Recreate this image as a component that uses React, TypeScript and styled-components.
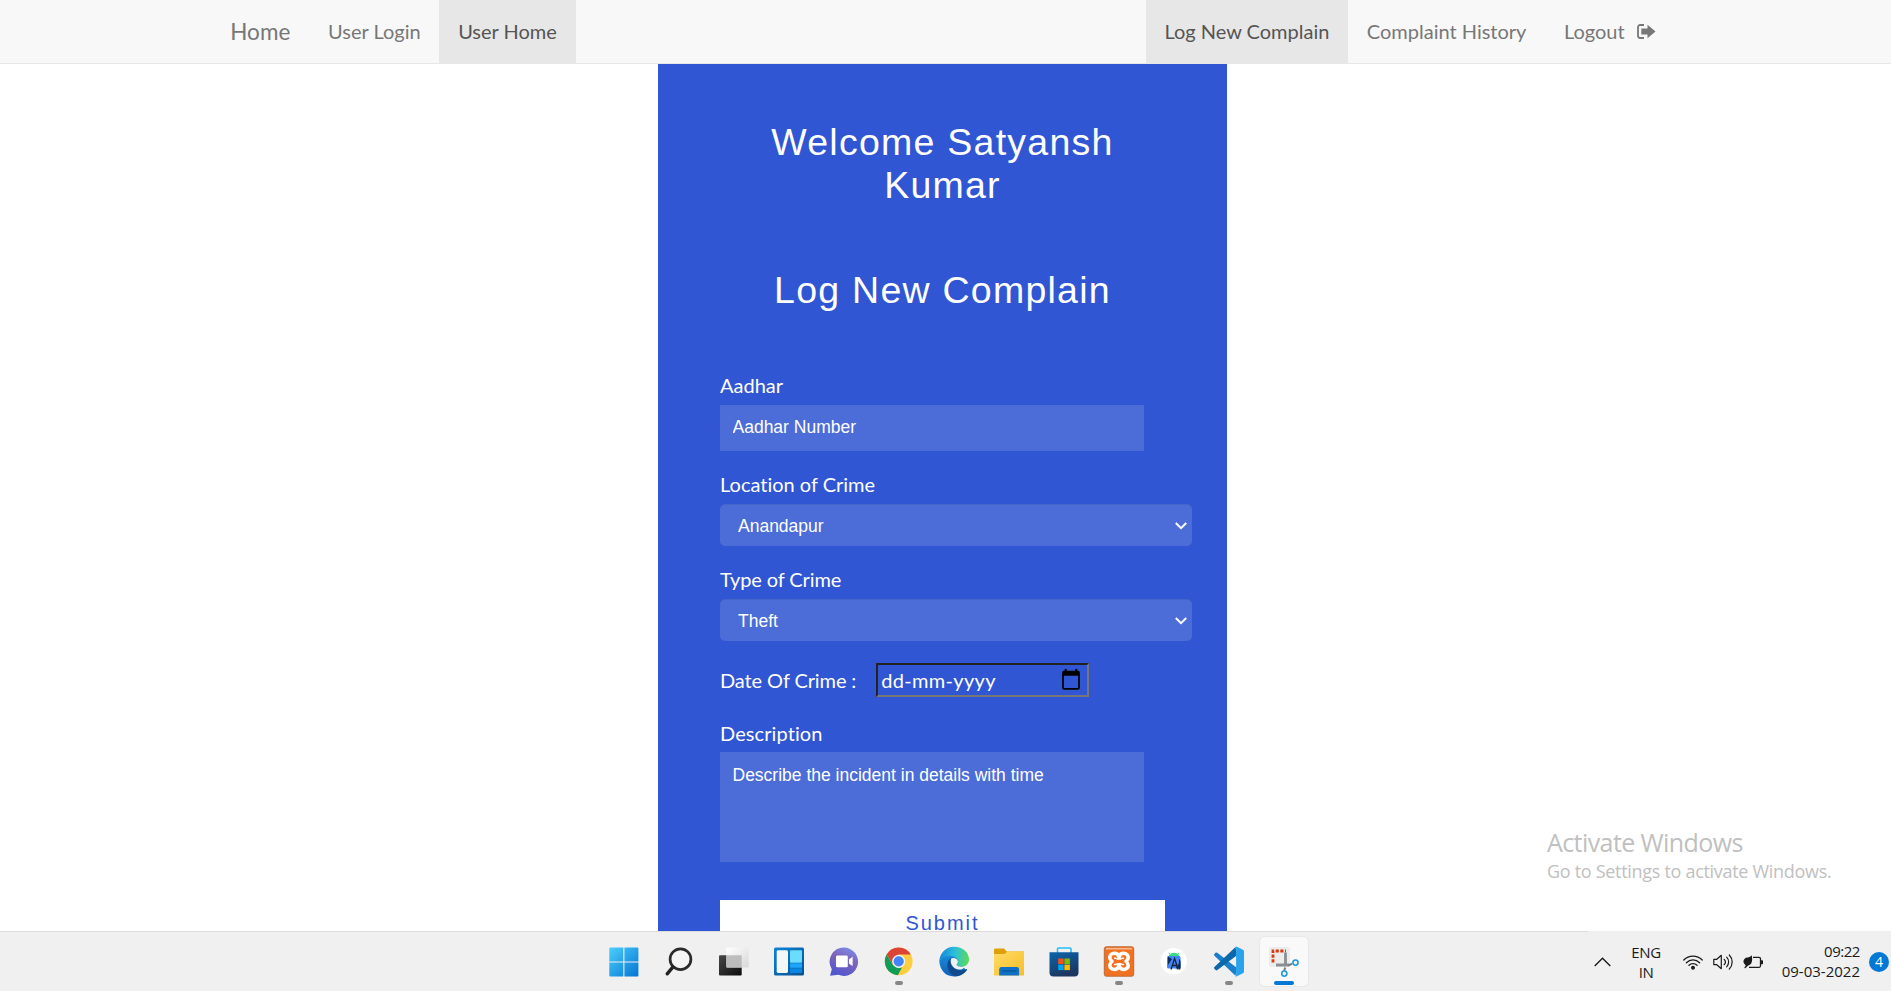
import React from 'react';
import styled, { createGlobalStyle, css } from 'styled-components';

const GlobalStyle = createGlobalStyle`
  *, *::before, *::after { box-sizing: border-box; }
  body { margin: 0; background: #fff; overflow: hidden; }
`;

const sans = '"Liberation Sans", Arial, sans-serif';
const lato = 'Lato, "Liberation Sans", sans-serif';
const system = '"Open Sans", "Noto Sans", sans-serif';

const Screen = styled.div`
  position: relative;
  display: flex;
  flex-direction: column;
  height: 991px;
  font-family: ${lato};
  font-variant-ligatures: none;
`;

/* ---------- navigation ---------- */

const Navbar = styled.nav`
  flex: none;
  display: flex;
  justify-content: space-between;
  height: 64px;
  padding: 0 216.6px 0 211.4px;
  background: #f8f8f8;
  border-bottom: 1px solid #e7e7e7;
`;

const NavGroup = styled.div`
  display: flex;
`;

const Brand = styled.a`
  padding: 18.75px;
  font-size: 22.5px;
  line-height: 25px;
  letter-spacing: 0.1px;
  color: #777;
`;

const NavLink = styled.a<{ $active?: boolean }>`
  display: flex;
  align-items: center;
  gap: 12px;
  height: 64px;
  padding: 0 18.75px 1.5px;
  font-size: 20px;
  line-height: 25px;
  white-space: nowrap;
  color: ${(p) => (p.$active ? '#555' : '#777')};
  background: ${(p) => (p.$active ? '#e7e7e7' : 'transparent')};
`;

/* ---------- complaint form ---------- */

const Main = styled.main`
  flex: 1;
  min-height: 0;
  overflow: hidden;
  padding-left: 658px;
`;

const Panel = styled.section`
  width: 569px;
  height: 867px;
  padding: 57px 0 0 62px;
  background: #3056d3;
  color: #fff;
`;

const Heading = styled.h2`
  width: 445px;
  margin: 0 0 62px;
  padding: 0 40px;
  font: 400 37.5px/42.75px ${sans};
  letter-spacing: 1.25px;
  text-align: center;
`;

const Form = styled.form`
  display: flex;
  flex-direction: column;
  align-items: flex-start;
`;

const Field = styled.div<{ $gap: number; $after: number }>`
  display: flex;
  flex-direction: column;
  gap: ${(p) => p.$gap}px;
  margin-bottom: ${(p) => p.$after}px;
`;

const Label = styled.label<{ $tracking?: number }>`
  font-size: 20px;
  line-height: 25px;
  letter-spacing: ${(p) => p.$tracking ?? 0}px;
`;

const control = css`
  display: block;
  margin: 0;
  border: 0;
  outline: 0;
  background: #4c6dd8;
  color: #fff;
  font: 400 17.5px ${sans};
  &::placeholder { color: #fff; opacity: 1; }
`;

const TextInput = styled.input`
  ${control}
  width: 424px;
  height: 46px;
  padding: 0 12.5px 2px;
`;

const TextArea = styled.textarea`
  ${control}
  width: 424px;
  height: 110px;
  padding: 12.5px;
  resize: none;
`;

const SelectWrap = styled.div`
  position: relative;
  width: 472px;
`;

const Select = styled.select`
  ${control}
  appearance: none;
  width: 100%;
  height: 42px;
  padding: 1px 18px 0;
  border-radius: 5px;
  box-shadow: inset 0 1px 1px rgba(0, 0, 0, 0.075);
`;

const Chevron = styled.svg`
  position: absolute;
  right: 4px;
  top: 17px;
  pointer-events: none;
`;

const DateRow = styled.div`
  display: flex;
  align-items: center;
  margin: 22px 0 24px;
`;

const DateInput = styled.div`
  display: flex;
  align-items: center;
  justify-content: space-between;
  width: 213px;
  height: 34px;
  margin-left: 20px;
  padding: 0 5px 0 2px;
  border: 2px solid;
  border-color: #222 #767676 #767676 #222;
  font-size: 20px;
`;

const DateText = styled.span`
  padding-left: 1px;
  line-height: 24px;
  letter-spacing: 0.32px;
`;

const Submit = styled.button`
  display: flex;
  justify-content: center;
  align-items: flex-start;
  width: 445px;
  height: 50px;
  margin-top: 38px;
  padding: 12px 0 0;
  border: 0;
  background: #fff;
  color: #3056d3;
  font: 400 20px/23px ${sans};
  letter-spacing: 2px;
`;

/* ---------- desktop overlay and taskbar ---------- */

const Watermark = styled.aside`
  position: absolute;
  left: 1547px;
  top: 825px;
  font-family: ${system};
  color: #c0c0c0;
  white-space: nowrap;
`;

const WatermarkTitle = styled.div`
  font-size: 25px;
  line-height: 34px;
  letter-spacing: -0.58px;
`;

const WatermarkText = styled.div`
  font-size: 18px;
  line-height: 25px;
  letter-spacing: -0.3px;
`;

const Taskbar = styled.footer`
  flex: none;
  display: flex;
  justify-content: space-between;
  height: 60px;
  padding: 6px 2px 5px 599.5px;
  background: linear-gradient(#dcdcdc, #dcdcdc) 0 0 / 1588px 1px no-repeat, #f0f0f0;
`;

const Apps = styled.div`
  display: flex;
  gap: 7px;
`;

const AppTile = styled.div<{ $state?: 'open' | 'active' }>`
  position: relative;
  display: flex;
  align-items: center;
  justify-content: center;
  width: 48.04px;
  height: 49px;
  border-radius: 5px;
  ${(p) =>
    p.$state === 'active' &&
    css`
      background: #f9f9f9;
      box-shadow: 0 0 0 1px #e8e8e8;
    `}
  ${(p) =>
    p.$state &&
    css`
      &::after {
        content: '';
        position: absolute;
        bottom: 1px;
        width: ${p.$state === 'active' ? 20 : 8}px;
        height: 4px;
        border-radius: 2px;
        background: ${p.$state === 'active' ? '#0078d4' : '#868686'};
      }
    `}
`;

const Tray = styled.div`
  display: flex;
  align-items: center;
  height: 49px;
  font: 400 15px/20px ${system};
  color: #1b1b1b;
`;

const Language = styled.div`
  width: 34px;
  margin: 0 20px 0 18px;
  text-align: center;
  letter-spacing: -0.4px;
`;

const StatusIcons = styled.div`
  display: flex;
  align-items: center;
  gap: 10px;
`;

const Clock = styled.div`
  width: 78px;
  margin: -2px 9px 0 19px;
  display: flex;
  flex-direction: column;
  align-items: flex-end;
  white-space: nowrap;
`;

const ClockTime = styled.div`
  letter-spacing: -0.45px;
`;

const Badge = styled.div`
  width: 20px;
  height: 20px;
  border-radius: 50%;
  background: #0078d4;
  color: #fff;
  font-size: 14px;
  line-height: 20px;
  text-align: center;
`;

const Icon = ({ children }: { children: React.ReactNode }) => (
  <svg width="32" height="32" viewBox="0 0 32 32">{children}</svg>
);

const WindowsIcon = () => (
  <Icon>
    <defs>
      <linearGradient id="win" x1="0" y1="0" x2="32" y2="32" gradientUnits="userSpaceOnUse">
        <stop offset="0" stopColor="#4fd3ff" />
        <stop offset="1" stopColor="#0070d0" />
      </linearGradient>
    </defs>
    <path fill="url(#win)" d="M2.3 1.5h13v14h-14v-13a1 1 0 0 1 1-1zM16.4 1.5h13a1 1 0 0 1 1 1v13h-14zM1.3 16.5h14v14h-13a1 1 0 0 1-1-1zM16.4 16.5h14v13a1 1 0 0 1-1 1h-13z" />
  </Icon>
);

const SearchIcon = () => (
  <Icon>
    <circle cx="17.5" cy="13.2" r="10.4" fill="#f5f5f5" stroke="#2b2b2b" strokeWidth="2.7" />
    <path d="M9.8 21.2 4.2 27.8" stroke="#222" strokeWidth="3.4" strokeLinecap="round" />
  </Icon>
);

const TaskViewIcon = () => (
  <Icon>
    <defs>
      <linearGradient id="tvd" x1="0" y1="0" x2="1" y2="1"><stop stopColor="#484848" /><stop offset="1" stopColor="#0c0c0c" /></linearGradient>
      <linearGradient id="tvl" x1="0" y1="0" x2="1" y2="1"><stop stopColor="#fff" /><stop offset="1" stopColor="#d8d8d8" /></linearGradient>
    </defs>
    <rect x="1" y="9.3" width="22.7" height="20.3" rx="1" fill="url(#tvd)" />
    <rect x="8.4" y="1.5" width="22.3" height="20" rx="1" fill="url(#tvl)" />
    <rect x="8.4" y="9.3" width="15.3" height="12.2" fill="#bdbdbd" />
  </Icon>
);

const WidgetsIcon = () => (
  <Icon>
    <defs><linearGradient id="wdg" x1="0" y1="0" x2="1" y2="1"><stop stopColor="#0b84d8" /><stop offset="1" stopColor="#0a4f8f" /></linearGradient></defs>
    <rect x="1" y="1.5" width="30" height="28" rx="1.5" fill="url(#wdg)" />
    <rect x="3.7" y="4.2" width="11.3" height="22.7" rx="1.4" fill="#f6f6f6" />
    <rect x="17" y="4.2" width="12" height="12.5" rx="1" fill="#6bdcff" />
    <rect x="17" y="17.2" width="12" height="4.6" rx=".6" fill="#1ba6fb" />
    <rect x="17" y="22.3" width="12" height="4.6" rx=".6" fill="#0a86e0" />
  </Icon>
);

const ChatIcon = () => (
  <Icon>
    <defs><linearGradient id="cht" x1=".8" y1="0" x2=".4" y2="1"><stop stopColor="#7b8fee" /><stop offset=".45" stopColor="#7e63b8" /><stop offset="1" stopColor="#5157cf" /></linearGradient></defs>
    <path fill="url(#cht)" d="M16 1.5a14.2 14.2 0 1 1-5.6 27.3L2 29.7l1.8-6.5A14.2 14.2 0 0 1 16 1.5z" />
    <rect x="8" y="9.5" width="11.8" height="11.8" rx="1.4" fill="#fff" />
    <path fill="#fff" d="m21 13.4 3.6-2.7v9.4L21 17.5z" />
  </Icon>
);

const ChromeIcon = () => (
  <Icon>
    <circle cx="15.7" cy="15.3" r="13.9" fill="#ffcd40" />
    <path fill="#db4437" d="M3.6 8.4A13.9 13.9 0 0 1 27.8 8.6H15.7L9.8 18.6z" />
    <path fill="#0f9d58" d="M3.6 8.4l6.1 10.4 6 3.3 3.5-.8-4.4 7.9A13.9 13.9 0 0 1 3.6 8.4z" />
    <circle cx="15.7" cy="15.3" r="6.6" fill="#f1f1f1" />
    <circle cx="15.7" cy="15.3" r="5.1" fill="#4285f4" />
  </Icon>
);

const EdgeIcon = () => (
  <Icon>
    <defs>
      <linearGradient id="eg1" x1="2" y1="8" x2="31" y2="12" gradientUnits="userSpaceOnUse"><stop stopColor="#1787d8" /><stop offset=".5" stopColor="#2bbfdc" /><stop offset="1" stopColor="#5bdc52" /></linearGradient>
      <linearGradient id="eg2" x1="0" y1="0" x2="0" y2="1"><stop stopColor="#1c8fdd" /><stop offset="1" stopColor="#0b62b8" /></linearGradient>
    </defs>
    <path fill="url(#eg2)" d="M1.3 15C2 24 7 30.4 16 30.4c5 0 9-2 12-6L18 10 6 7z" />
    <path fill="url(#eg1)" d="M1.3 15.8C1.5 7 8 .8 16 .8c9 0 15 6 15 12.4 0 4.8-3.3 7.6-7.6 7.6-3 0-4.8-.8-4.8-2 0-.8 1.3-1.4 1.3-3.5 0-3-3-5.3-7.6-5.3C7 10 2.2 12 1.3 15.8z" />
    <path fill="#114a8b" d="M12.7 12.2c-5.5 3.5-4.5 15 4.8 18 5-.2 9-2.6 11.5-6.3.3-.6-.3-1-.8-.7-6 2.7-14.3.6-15.5-6.2-.2-1.7 0-3.2.9-4.6z" />
    <path fill="#f0f0f0" d="M13.3 12.6c1.5-1.3 6-.7 6.6 2.7.2 2-1.5 2.9-1.3 3.7.7 1.7 5 2.4 8.5.9-1 2.7-3.6 3.8-6.3 3.6-6.8-.6-9.3-7.7-7.5-10.9z" />
  </Icon>
);

const FolderIcon = () => (
  <Icon>
    <defs><linearGradient id="fld" x1="0" y1="0" x2="1" y2="1"><stop stopColor="#ffdb62" /><stop offset="1" stopColor="#f8bd2c" /></linearGradient></defs>
    <path fill="#e09f06" d="M2 2.5h9l2.8 3H31v5H1v-7z" />
    <path fill="url(#fld)" d="M1 8h10.5l3-2.4H30a1 1 0 0 1 1 1v22.8H1z" />
    <path fill="#0d72c7" d="M6.2 29.4v-6a2.3 2.3 0 0 1 2.3-2.3h15.3a2.3 2.3 0 0 1 2.3 2.3v6z" />
    <path stroke="#064a86" strokeWidth="1" strokeLinecap="round" d="M9.5 25h13.5" />
  </Icon>
);

const StoreIcon = () => (
  <Icon>
    <defs><linearGradient id="sto" x1="0" y1="0" x2=".4" y2="1"><stop stopColor="#0a66ae" /><stop offset="1" stopColor="#1c3660" /></linearGradient></defs>
    <path d="M9.5 8V3a1 1 0 0 1 1-1h11.5a1 1 0 0 1 1 1v5" fill="none" stroke="#27bdf5" strokeWidth="1.6" />
    <path fill="url(#sto)" d="M1.5 6.2h29v20.3a4 4 0 0 1-4 4h-21a4 4 0 0 1-4-4z" />
    <rect x="10.2" y="12.5" width="5.5" height="5.5" fill="#f25022" />
    <rect x="16.4" y="12.5" width="5.5" height="5.5" fill="#7fba00" />
    <rect x="10.2" y="18.6" width="5.5" height="5.5" fill="#00a4ef" />
    <rect x="16.4" y="18.6" width="5.5" height="5.5" fill="#ffb900" />
  </Icon>
);

const XamppIcon = () => (
  <Icon>
    <rect x="1.3" y=".8" width="29.4" height="29.4" rx="2" fill="#f27121" stroke="#bb6a3a" />
    <path d="M3 2.7h26" stroke="#f9b98e" strokeWidth="1.6" />
    <path
      fill="none"
      stroke="#fff"
      strokeWidth="3.6"
      strokeLinejoin="round"
      d="M16 10.6c-.9-2.3-2.3-3.3-4.5-3.3-3 0-4.7 1.8-4.7 4.2 0 1.7.8 2.9 2.2 3.9-1.4 1-2.2 2.2-2.2 3.9 0 2.4 1.7 4.2 4.7 4.2 2.2 0 3.6-1 4.5-3.3.9 2.3 2.3 3.3 4.5 3.3 3 0 4.7-1.8 4.7-4.2 0-1.7-.8-2.9-2.2-3.9 1.4-1 2.2-2.2 2.2-3.9 0-2.4-1.7-4.2-4.7-4.2-2.2 0-3.6 1-4.5 3.3z"
    />
    <path d="M11.6 12.3h1M19.4 12.3h1M11.6 18.5h1M19.4 18.5h1" stroke="#fff" strokeWidth="1.6" strokeLinecap="round" />
    <path d="M12.6 15.4h6.8" stroke="#f27121" strokeWidth="2" />
    <path d="M14.3 12.6h3.4M14.3 18.2h3.4" stroke="#fff" strokeWidth="2.4" strokeLinecap="round" />
  </Icon>
);

const StudioIcon = () => (
  <Icon>
    <circle cx="15.7" cy="15.3" r="13.2" fill="#fff" />
    <path fill="#3ddc84" d="M10.3 10.5a6.3 6.3 0 0 1 11.5 0z" />
    <path d="m10.8 6.8 1.5 1.8M21 6.8l-1.4 1.8" stroke="#3ddc84" strokeWidth="1" />
    <rect x="9" y="10" width="13.5" height="12.5" rx="1.5" fill="#4285f4" />
    <path fill="#0b2e62" d="m10 10.5 4 2.5-4 6zM22.5 15v7.5h-5z" />
    <path d="m13 23.5 3.6-11 3.6 11M14.2 19.5h5M21.6 13.5v10" fill="none" stroke="#10243d" strokeWidth="1.3" />
  </Icon>
);

const CodeIcon = () => (
  <Icon>
    <path fill="#1c7fc9" d="M4.3 6.8a1.5 1.5 0 0 0-1.9 0L1.4 7.9a1.3 1.3 0 0 0 0 1.9L22.5 29.8 24 22z" />
    <path fill="#0b68ad" d="M22.5.9 1.4 20.9a1.3 1.3 0 0 0 0 1.9l1.2 1.2a1.5 1.5 0 0 0 1.8.1L24 9.2z" />
    <path fill="#2aa3ee" d="M22.4.8a1.8 1.8 0 0 1 1.4-.1l6.2 3a1.8 1.8 0 0 1 1 1.7v20.2a1.8 1.8 0 0 1-1 1.7l-6.2 3a1.8 1.8 0 0 1-2-.4c.7.7 1.3-.1 1.3-.8V2c0-.9-.5-1.4-.7-1.2z" />
  </Icon>
);

const SnipIcon = () => (
  <Icon>
    <rect x="1" y="1" width="21" height="20" rx="2" fill="#ececec" />
    <path fill="none" stroke="#cf3d12" strokeWidth="2.8" strokeDasharray="3.2 1.5" d="M5 16.5V5h13" />
    <path fill="none" stroke="#8a8f94" strokeWidth="2.8" d="M17.5 6.5V20M8 19h13" />
    <path stroke="#777c80" strokeWidth="2" d="m20.5 19.5 3.5-1.8M17.2 21.5l-1 3.2" />
    <circle cx="27.5" cy="16.6" r="2.6" fill="#f4f4f4" stroke="#2299d8" strokeWidth="1.6" />
    <circle cx="16.3" cy="27.6" r="2.6" fill="#f4f4f4" stroke="#2299d8" strokeWidth="1.6" />
  </Icon>
);

const LogoutIcon = () => (
  <svg width="19" height="15" viewBox="0 0 19 15">
    <path d="M7 1H3.2A2.2 2.2 0 0 0 1 3.2v8.6A2.2 2.2 0 0 0 3.2 14H7" fill="none" stroke="#777" strokeWidth="1.8" />
    <path fill="#777" d="M4.3 4.5h6.2V.8L18.5 7.5l-8 6.7v-3.7H4.3z" />
  </svg>
);

const CalendarIcon = () => (
  <svg width="20" height="22" viewBox="0 0 20 22">
    <path d="M1 5v13.8a1 1 0 0 0 1 1h14a1 1 0 0 0 1-1V5" fill="none" stroke="#000" strokeWidth="1.7" />
    <path d="M.2 3.3a1.5 1.5 0 0 1 1.5-1.5h1V0h2v1.8h8.6V0h2v1.8h1a1.5 1.5 0 0 1 1.5 1.5v3.5H.2z" />
  </svg>
);

const WifiIcon = () => (
  <svg width="20" height="16" viewBox="0 0 20 16" fill="none" stroke="#1b1b1b" strokeWidth="1.3" strokeLinecap="round">
    <path d="M.8 6a13 13 0 0 1 18.4 0M3.4 8.7a9.3 9.3 0 0 1 13.2 0M6 11.3a5.6 5.6 0 0 1 8 0" />
    <circle cx="10" cy="13.7" r="1.3" fill="#1b1b1b" />
  </svg>
);

const VolumeIcon = () => (
  <svg width="20" height="16" viewBox="0 0 20 16" fill="none" stroke="#1b1b1b" strokeWidth="1.2" strokeLinecap="round" strokeLinejoin="round">
    <path d="M.8 5.3v5.4h3l4.5 4V1.3l-4.5 4zM11.2 5.3a4 4 0 0 1 0 5.4M13.7 3.2a7 7 0 0 1 0 9.6M16.3 1a10 10 0 0 1 0 14" />
  </svg>
);

const BatteryIcon = () => (
  <svg width="20" height="14" viewBox="0 0 20 14">
    <path d="M10 2.3h6a1.5 1.5 0 0 1 1.5 1.5v7a1.5 1.5 0 0 1-1.5 1.5H6" fill="none" stroke="#1b1b1b" strokeWidth="1.3" />
    <path d="M18 5.3h1.3a.7.7 0 0 1 .7.7v2.6a.7.7 0 0 1-.7.7H18z" fill="#1b1b1b" />
    <path d="M8.7.3C9.8 5.5 9 9.8 5.2 10.6L2 13.5l-.7-1 1.5-2C-1.7 6.8 1 2.5 4.5 2.4 6.5 2.3 7.8 1.6 8.7.3z" fill="#1b1b1b" />
  </svg>
);

const apps: { icon: () => React.ReactElement; state?: 'open' | 'active' }[] = [
  { icon: WindowsIcon },
  { icon: SearchIcon },
  { icon: TaskViewIcon },
  { icon: WidgetsIcon },
  { icon: ChatIcon },
  { icon: ChromeIcon, state: 'open' },
  { icon: EdgeIcon },
  { icon: FolderIcon },
  { icon: StoreIcon },
  { icon: XamppIcon, state: 'open' },
  { icon: StudioIcon },
  { icon: CodeIcon, state: 'open' },
  { icon: SnipIcon, state: 'active' },
];

const Dropdown = ({ value }: { value: string }) => (
  <SelectWrap>
    <Select defaultValue={value}>
      <option>{value}</option>
    </Select>
    <Chevron width="14" height="10" viewBox="0 0 14 10" fill="none" stroke="#fff" strokeWidth="2">
      <path d="m1.8 2 5.2 5.2L12.2 2" />
    </Chevron>
  </SelectWrap>
);

export default function App() {
  return (
    <Screen>
      <GlobalStyle />
      <Navbar>
        <NavGroup>
          <Brand>Home</Brand>
          <NavLink>User Login</NavLink>
          <NavLink $active>User Home</NavLink>
        </NavGroup>
        <NavGroup>
          <NavLink $active>Log New Complain</NavLink>
          <NavLink>Complaint History</NavLink>
          <NavLink>
            Logout
            <LogoutIcon />
          </NavLink>
        </NavGroup>
      </Navbar>

      <Main>
        <Panel>
          <Heading>Welcome Satyansh Kumar</Heading>
          <Heading>Log New Complain</Heading>
          <Form>
            <Field $gap={7} $after={21}>
              <Label>Aadhar</Label>
              <TextInput placeholder="Aadhar Number" />
            </Field>
            <Field $gap={7} $after={21}>
              <Label>Location of Crime</Label>
              <Dropdown value="Anandapur" />
            </Field>
            <Field $gap={7} $after={0}>
              <Label $tracking={-0.1}>Type of Crime</Label>
              <Dropdown value="Theft" />
            </Field>
            <DateRow>
              <Label $tracking={-0.1}>Date Of Crime :</Label>
              <DateInput>
                <DateText>dd-mm-yyyy</DateText>
                <CalendarIcon />
              </DateInput>
            </DateRow>
            <Field $gap={6} $after={0}>
              <Label $tracking={0.1}>Description</Label>
              <TextArea placeholder="Describe the incident in details with time" />
            </Field>
            <Submit type="button">Submit</Submit>
          </Form>
        </Panel>
      </Main>

      <Taskbar>
        <Apps>
          {apps.map(({ icon: Glyph, state }, i) => (
            <AppTile key={i} $state={state}>
              <Glyph />
            </AppTile>
          ))}
        </Apps>
        <Tray>
          <svg width="17" height="10" viewBox="0 0 17 10" fill="none" stroke="#1b1b1b" strokeWidth="1.4">
            <path d="m.7 9 7.8-7.8L16.3 9" />
          </svg>
          <Language>
            ENG
            <br />
            IN
          </Language>
          <StatusIcons>
            <WifiIcon />
            <VolumeIcon />
            <BatteryIcon />
          </StatusIcons>
          <Clock>
            <ClockTime>09:22</ClockTime>
            09-03-2022
          </Clock>
          <Badge>4</Badge>
        </Tray>
      </Taskbar>

      <Watermark>
        <WatermarkTitle>Activate Windows</WatermarkTitle>
        <WatermarkText>Go to Settings to activate Windows.</WatermarkText>
      </Watermark>
    </Screen>
  );
}
